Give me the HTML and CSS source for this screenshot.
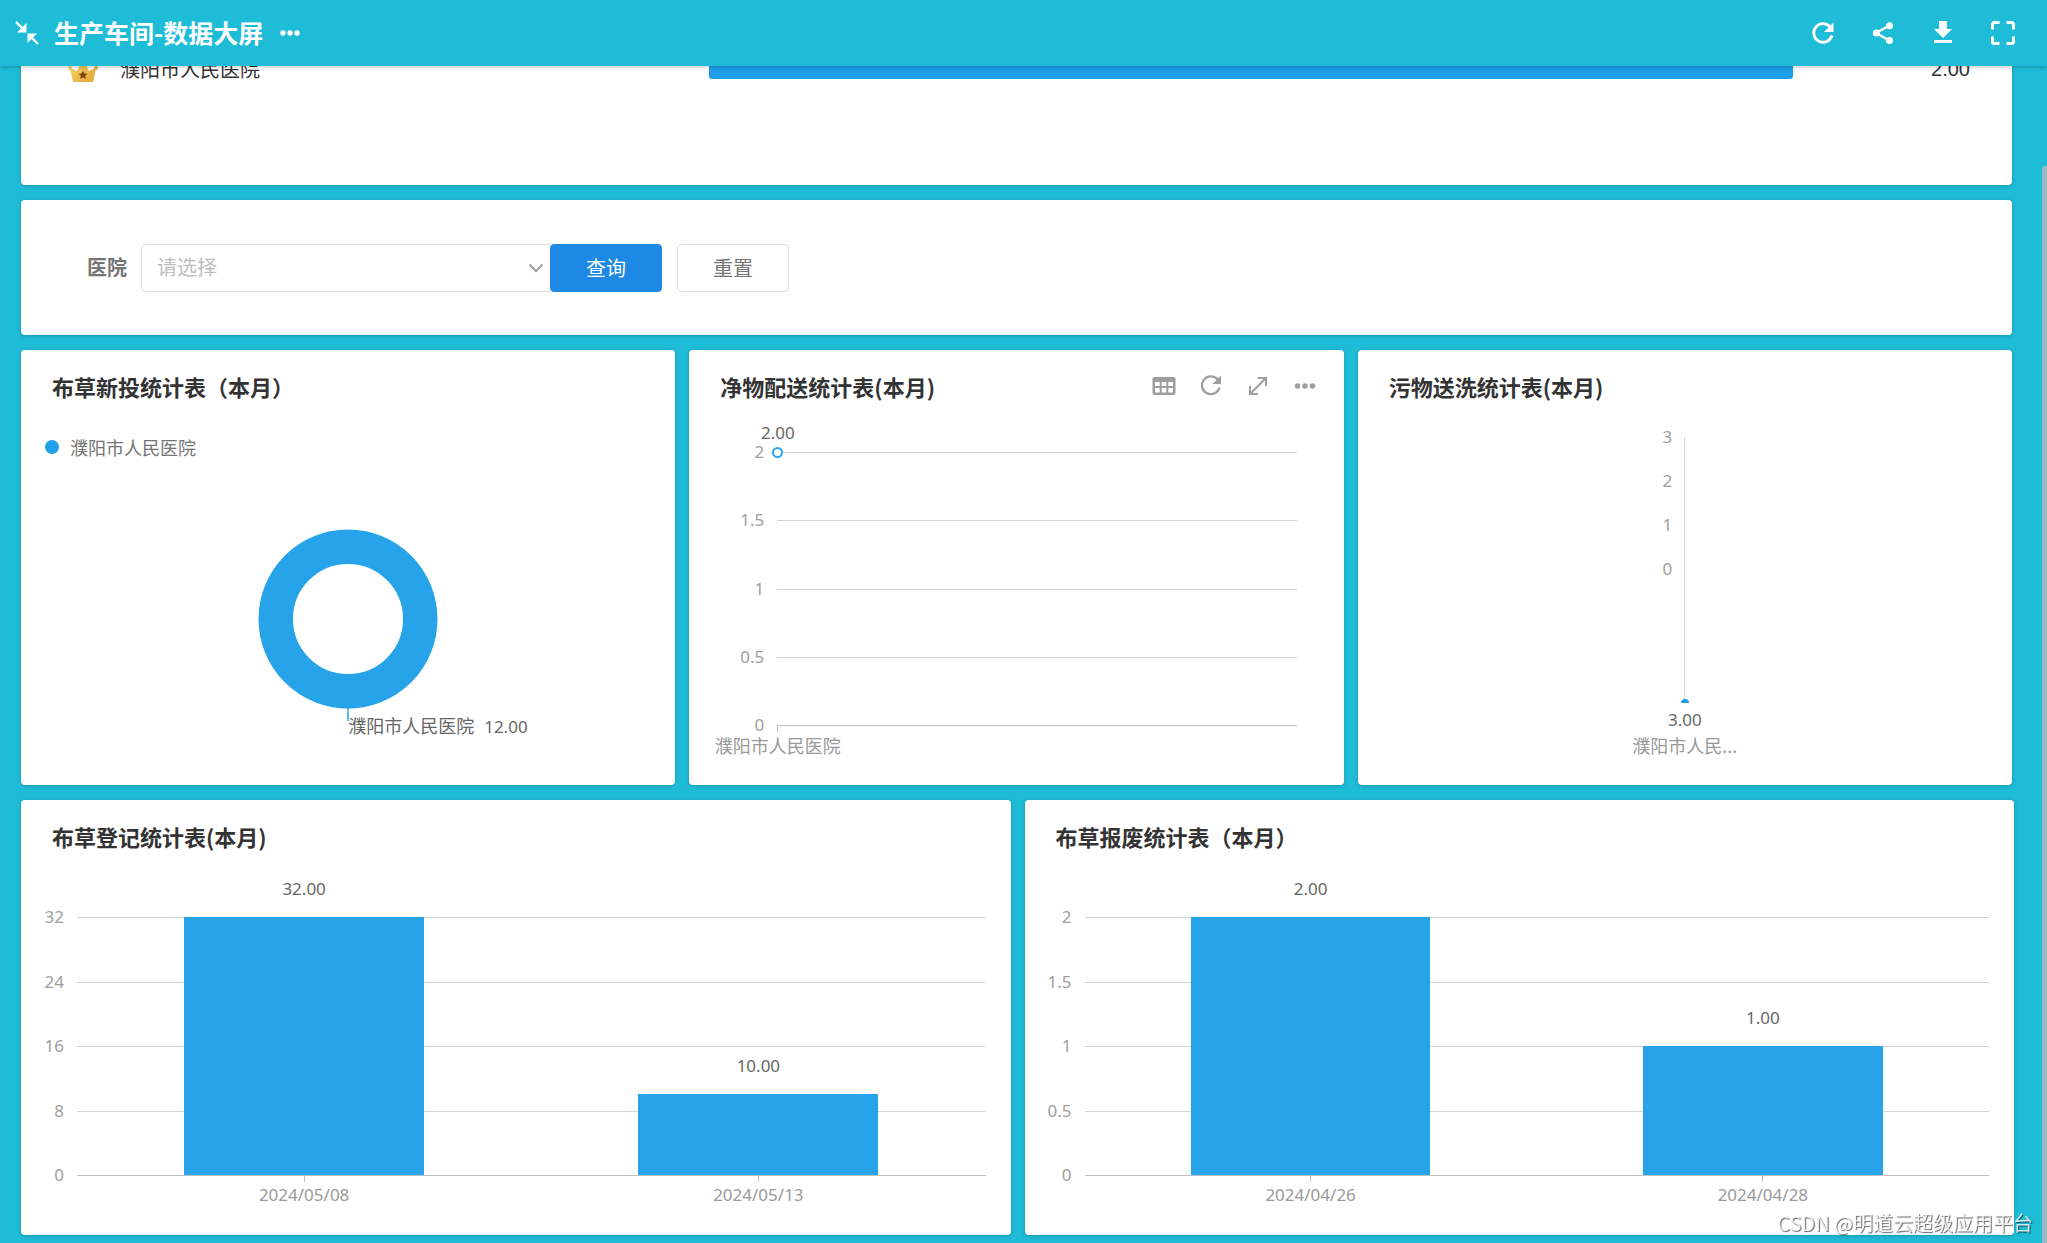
FILE: index.html
```html
<!DOCTYPE html>
<html lang="zh-CN">
<head>
<meta charset="utf-8">
<meta name="viewport" content="width=device-width, initial-scale=1">
<title>生产车间-数据大屏</title>
<link rel="stylesheet" href="styles.css">
</head>
<body>
<header class="topbar">
  <button class="icon-btn" type="button" aria-label="退出全屏">
    <svg width="24" height="24" viewBox="0 0 24 24" fill="none" stroke="#fff" stroke-width="2.4"><path d="M1 1l8 8M23 23l-8-8"/><path fill="#fff" stroke="none" d="M11.500 2v9.500H2zM12.500 12.500H22L12.500 22z"/></svg>
  </button>
  <h1 class="topbar-title">生产车间-数据大屏</h1>
  <button class="icon-btn" type="button" aria-label="更多">
    <svg width="20" height="6" viewBox="0 0 20 6" fill="#fff"><circle cx="3" cy="3" r="2.700"/><circle cx="10" cy="3" r="2.700"/><circle cx="17" cy="3" r="2.700"/></svg>
  </button>
  <nav class="topbar-actions">
    <button class="icon-btn" type="button" aria-label="刷新">
      <svg width="24" height="24" viewBox="0 0 24 24"><path fill="none" stroke="#fff" stroke-width="2.800" d="M21 14.500A9.300 9.300 0 1 1 19 5.700"/><path fill="#fff" d="M22.500 1.500v9.500H13z"/></svg>
    </button>
    <button class="icon-btn" type="button" aria-label="分享">
      <svg width="24" height="24" viewBox="0 0 24 24" fill="#fff"><path fill="none" stroke="#fff" stroke-width="2.400" d="M18.500 4.500L5 12l13.500 7.500"/><circle cx="18.500" cy="4.800" r="3.500"/><circle cx="5.300" cy="12" r="3.500"/><circle cx="18.500" cy="19.500" r="3.500"/></svg>
    </button>
    <button class="icon-btn" type="button" aria-label="下载">
      <svg width="24" height="24" viewBox="0 0 24 24" fill="#fff"><path d="M8 0h8v8h5l-9 9-9-9h5zM3 19h18v3H3z"/></svg>
    </button>
    <button class="icon-btn" type="button" aria-label="全屏">
      <svg width="24" height="24" viewBox="0 0 24 24" fill="none" stroke="#fff" stroke-width="3"><path d="M1.500 8.500V3.500a2 2 0 0 1 2-2h5M15.500 1.500h5a2 2 0 0 1 2 2v5M22.500 15.500v5a2 2 0 0 1-2 2h-5M8.500 22.500h-5a2 2 0 0 1-2-2v-5"/></svg>
    </button>
  </nav>
</header>

<main class="board">
  <section class="row">
    <div class="card ranking">
      <ol class="rank-list">
        <li class="rank-item">
          <svg class="crown" width="30" height="28" viewBox="0 0 30 28">
            <defs><linearGradient id="gold" x1="0" y1="0" x2="1" y2="1"><stop offset="0" stop-color="#f9d976"/><stop offset="1" stop-color="#dfa52e"/></linearGradient></defs>
            <path fill="url(#gold)" d="M2 13l7 3 6-12 6 12 7-3-3 14H5z"/>
            <circle cx="2" cy="13" r="2" fill="#f3cf60"/><circle cx="28" cy="13" r="2" fill="#e3b040"/><circle cx="15" cy="4" r="3" fill="#f3cf60"/>
            <path fill="#833f14" d="M15 15.500l1.300 2.900 3.200.300-2.400 2.100.7 3.200-2.800-1.700-2.800 1.700.7-3.200-2.400-2.100 3.200-.3z"/>
          </svg>
          <span class="rank-name">濮阳市人民医院</span>
          <span class="rank-bar"></span>
          <span class="rank-value">2.00</span>
        </li>
      </ol>
    </div>
  </section>

  <section class="row">
    <form class="card filter">
      <label class="filter-label" for="hospital">医院</label>
      <div class="select-box">
        <select class="select" id="hospital"><option>请选择</option><option>濮阳市人民医院</option></select>
        <svg class="select-arrow" width="16" height="10" viewBox="0 0 16 10" fill="none" stroke="#9e9e9e" stroke-width="2"><path d="M1.500 1.500L8 8l6.500-6.500"/></svg>
      </div>
      <button class="btn btn-primary" type="button">查询</button>
      <button class="btn btn-plain" type="reset">重置</button>
    </form>
  </section>

  <section class="row thirds">
    <article class="card">
      <header class="card-head"><h2 class="card-title">布草新投统计表（本月）</h2></header>
      <p class="legend"><span class="legend-dot"></span>濮阳市人民医院</p>
      <div class="donut">
        <svg width="180" height="192" viewBox="0 0 180 192" fill="none"><circle cx="90" cy="90" r="72.250" stroke="#26a3e9" stroke-width="34.500"/><path d="M90 179v13" stroke="#26a3e9" stroke-width="1.500"/></svg>
        <p class="donut-label">濮阳市人民医院<span class="num">12.00</span></p>
      </div>
    </article>

    <article class="card">
      <header class="card-head">
        <h2 class="card-title">净物配送统计表(本月)</h2>
        <div class="card-tools">
          <button class="icon-btn" type="button" aria-label="表格">
            <svg width="24" height="20" viewBox="0 0 24 20"><rect x="0.500" y="1" width="23" height="18" rx="2" fill="#9e9e9e"/><path fill="#fff" d="M3 6h4.700v4H3zM9.700 6h4.600v4H9.700zM16.300 6H21v4h-4.700zM3 12h4.700v4.500H3zM9.700 12h4.600v4.500H9.700zM16.300 12H21v4.500h-4.700z"/></svg>
          </button>
          <button class="icon-btn" type="button" aria-label="刷新">
            <svg width="24" height="24" viewBox="0 0 24 24"><path fill="none" stroke="#9e9e9e" stroke-width="2.200" d="M20.500 13.500A8.900 8.900 0 1 1 18.500 5.300"/><path fill="#9e9e9e" d="M22 1.500V10h-8.500z"/></svg>
          </button>
          <button class="icon-btn" type="button" aria-label="放大">
            <svg width="20" height="20" viewBox="0 0 20 20" fill="none" stroke="#9e9e9e" stroke-width="2"><path d="M2.500 17.500l15-15M10 2h8v8M2 10v8h8"/></svg>
          </button>
          <button class="icon-btn" type="button" aria-label="更多">
            <svg width="22" height="6" viewBox="0 0 22 6" fill="#9e9e9e"><circle cx="3.500" cy="3" r="2.700"/><circle cx="11" cy="3" r="2.700"/><circle cx="18.500" cy="3" r="2.700"/></svg>
          </button>
        </div>
      </header>
      <div class="chart line-chart">
        <div class="plot">
          <ul class="scale"><li>2</li><li>1.5</li><li>1</li><li>0.5</li><li>0</li></ul>
          <div class="layer">
            <div class="point"><span class="num point-value">2.00</span><span class="point-mark"></span></div>
          </div>
        </div>
        <div class="categories"><span class="point-name">濮阳市人民医院</span></div>
      </div>
    </article>

    <article class="card">
      <header class="card-head"><h2 class="card-title">污物送洗统计表(本月)</h2></header>
      <div class="radar">
        <ul class="radar-scale"><li>3</li><li>2</li><li>1</li><li>0</li></ul>
        <span class="radar-axis"></span>
      </div>
      <div class="radar-foot"><span class="radar-mark"></span><span class="num radar-value">3.00</span><span class="radar-name">濮阳市人民...</span></div>
    </article>
  </section>

  <section class="row halves">
    <article class="card">
      <header class="card-head"><h2 class="card-title">布草登记统计表(本月)</h2></header>
      <div class="chart bar-chart">
        <div class="plot">
          <ul class="scale"><li>32</li><li>24</li><li>16</li><li>8</li><li>0</li></ul>
          <div class="layer bars">
            <div class="bar-col"><span class="num bar-value">32.00</span><span class="bar" style="height:100%"></span></div>
            <div class="bar-col"><span class="num bar-value">10.00</span><span class="bar" style="height:31.25%"></span></div>
          </div>
        </div>
        <div class="categories"><span class="num">2024/05/08</span><span class="num">2024/05/13</span></div>
      </div>
    </article>

    <article class="card">
      <header class="card-head"><h2 class="card-title">布草报废统计表（本月）</h2></header>
      <div class="chart bar-chart wide-scale">
        <div class="plot">
          <ul class="scale"><li>2</li><li>1.5</li><li>1</li><li>0.5</li><li>0</li></ul>
          <div class="layer bars">
            <div class="bar-col"><span class="num bar-value">2.00</span><span class="bar" style="height:100%"></span></div>
            <div class="bar-col"><span class="num bar-value">1.00</span><span class="bar" style="height:50%"></span></div>
          </div>
        </div>
        <div class="categories"><span class="num">2024/04/26</span><span class="num">2024/04/28</span></div>
      </div>
    </article>
  </section>
</main>

<div class="scroll-thumb"></div>
<p class="watermark">CSDN @明道云超级应用平台</p>
</body>
</html>
```

FILE: styles.css
```css
* { box-sizing: border-box; }

body {
  margin: 0;
  min-height: 100vh;
  background: #1fbcd7;
  color: #333;
  font: 18px/24px "Noto Sans CJK SC", sans-serif;
}

h1, h2, p, ul, ol { margin: 0; padding: 0; }
ul, ol { list-style: none; }
svg { display: block; }

.num { font: 17px/24px "Noto Sans", "Noto Sans CJK SC", sans-serif; }

.icon-btn {
  display: flex;
  align-items: center;
  justify-content: center;
  width: 24px;
  height: 24px;
  padding: 0;
  border: 0;
  background: none;
}

/* Top bar: stays above the scrolled board */
.topbar {
  position: sticky;
  top: 0;
  z-index: 2;
  display: flex;
  align-items: center;
  height: 66px;
  padding: 0 32px 0 15px;
  background: #1fbcd7;
  box-shadow: 0 1px 4px rgba(0, 0, 0, 0.24);
}
.topbar-title {
  margin: 0 15px;
  padding-bottom: 2px;
  color: #fff;
  font-size: 25px;
  line-height: 36px;
  font-weight: 700;
}
.topbar-actions { display: flex; gap: 36px; margin-left: auto; }

/* Board */
.board {
  display: flex;
  flex-direction: column;
  gap: 15px;
  margin-top: -26px;
  padding-bottom: 8px;
}
.row { display: grid; gap: 14px; padding: 0 35px 0 21px; }
.thirds { grid-template-columns: repeat(3, minmax(0, 1fr)); }
.halves { grid-template-columns: repeat(2, minmax(0, 1fr)); padding-right: 33px; }
.card {
  background: #fff;
  border-radius: 4px;
  box-shadow: 0 1px 4px rgba(0, 0, 0, 0.2);
}
.thirds .card, .halves .card { min-height: 435px; }

.card-head {
  display: flex;
  align-items: center;
  justify-content: space-between;
  height: 74px;
  padding: 0 27px 2px 31px;
}
.card-title { font-size: 22px; line-height: 32px; font-weight: 700; }
.card-tools { display: flex; gap: 23px; }

/* Ranking */
.ranking { min-height: 145px; padding: 15px 42px 0 47px; }
.rank-item {
  display: grid;
  grid-template-columns: 30px 567px minmax(0, 1fr) 177px;
  align-items: center;
  column-gap: 22px;
  height: 28px;
}
.rank-name { font-size: 20px; line-height: 28px; }
.rank-bar { height: 20px; margin-right: -22px; border-radius: 3px; background: #1e9fe8; }
.rank-value { font: 20px/28px "Liberation Sans", sans-serif; text-align: right; }

/* Filter */
.filter {
  display: flex;
  align-items: center;
  min-height: 135px;
  padding: 0 66px;
}
.filter-label {
  margin-right: 14px;
  padding-bottom: 2px;
  color: #757575;
  font-size: 20px;
  line-height: 28px;
  font-weight: 700;
}
.select-box { display: grid; align-items: center; width: 409px; }
.select {
  grid-area: 1 / 1;
  width: 100%;
  height: 48px;
  padding: 0 15px 2px;
  border: 1px solid #ddd;
  border-right: 0;
  border-radius: 5px 0 0 5px;
  appearance: none;
  background: #fff;
  color: #bdbdbd;
  font: inherit;
  font-size: 20px;
}
.select-arrow {
  grid-area: 1 / 1;
  justify-self: end;
  margin-right: 6px;
  pointer-events: none;
}
.btn {
  height: 48px;
  padding: 0 35px;
  border: 1px solid #ddd;
  border-radius: 4px;
  font: inherit;
  font-size: 20px;
}
.btn-primary { border-color: #1e88e5; background: #1e88e5; color: #fff; }
.btn-plain { margin-left: 15px; background: #fff; color: #757575; }

/* Donut */
.legend {
  display: flex;
  align-items: center;
  gap: 11px;
  padding: 11px 24px 0;
  color: #757575;
}
.legend-dot { width: 14px; height: 14px; border-radius: 50%; background: #1e9fe8; }
.donut { display: flex; flex-direction: column; align-items: center; margin-top: 70px; }
.donut-label {
  align-self: flex-end;
  width: 50%;
  margin-top: -8px;
  color: #666;
  white-space: nowrap;
}
.donut-label .num { margin-left: 10px; }

/* Shared chart frame: scale rows with the data layer stacked on top */
.chart { --label: 22px; --left: 21px; --gap: 13px; }
.chart .plot { display: grid; }
.scale {
  grid-area: 1 / 1;
  display: flex;
  flex-direction: column;
  justify-content: space-between;
  color: #9e9e9e;
  font: 17px/24px "Noto Sans", sans-serif;
}
.scale li {
  display: grid;
  grid-template-columns: calc(var(--left) + var(--label)) 1fr;
  column-gap: var(--gap);
  align-items: start;
  height: 1px;
  text-align: right;
  line-height: 0;
}
.scale li::after { content: ""; height: 1px; background: #d4d4d4; }
.scale li:last-child::after { background: #bfbfbf; }
.layer, .categories { margin-left: calc(var(--left) + var(--label) + var(--gap)); }
.layer { grid-area: 1 / 1; }
.categories { color: #999; }
.categories span {
  display: flex;
  flex-direction: column;
  align-items: center;
  gap: 1px;
}
.categories span::before { content: ""; width: 1px; height: 6px; background: #bfbfbf; }

.bar-chart { padding: 43px 25px 0 0; }
.bar-chart .plot { height: 259px; }
.wide-scale { --label: 26px; }
.bars, .bar-chart .categories { display: grid; grid-template-columns: 1fr 1fr; }
.bar-col {
  display: flex;
  flex-direction: column;
  align-items: center;
  justify-content: flex-end;
  min-height: 0;
  height: 258px;
}
.bar { flex: none; width: 53%; max-width: 240px; background: rgba(30, 159, 232, 0.96); }
.bar-value { flex: none; margin-bottom: 16px; color: #666; }

.line-chart { --label: 32px; --left: 43px; padding: 28px 47px 0 0; }
.line-chart .plot { height: 274px; }
.point, .line-chart .categories {
  display: flex;
  flex-direction: column;
  align-items: center;
  width: 1px;
  white-space: nowrap;
}
.point { margin-top: -31px; }
.point-value { color: #666; }
.point-mark {
  width: 11px;
  height: 11px;
  margin-top: 2px;
  border: 2px solid #2ea6ea;
  border-radius: 50%;
  background: #fff;
}

/* Radar with a single dimension */
.radar {
  display: grid;
  grid-template-columns: 1fr 1px 1fr;
  column-gap: 12px;
  padding-top: 13px;
}
.radar-scale {
  display: flex;
  flex-direction: column;
  justify-content: space-between;
  height: 133px;
  color: #9e9e9e;
  font: 17px/24px "Noto Sans", sans-serif;
  text-align: right;
}
.radar-scale li { height: 1px; line-height: 0; }
.radar-axis { height: 262px; background: #d4d4d4; }
.radar-foot { display: flex; flex-direction: column; align-items: center; color: #999; }
.radar-mark { width: 8px; height: 4px; border-radius: 4px 4px 0 0; background: #1e9fe8; }
.radar-value { margin: 5px 0 1px; color: #666; }

/* Overlays */
.scroll-thumb {
  position: fixed;
  top: 166px;
  right: 0;
  bottom: 0;
  width: 5px;
  border-radius: 4px 0 0 0;
  background: #9bb9be;
}
.watermark {
  position: fixed;
  right: 14px;
  bottom: 6px;
  color: rgba(255, 255, 255, 0.8);
  font-size: 20px;
  line-height: 28px;
  text-shadow: 1px 1px 1px rgba(0, 0, 0, 0.6);
}
```
